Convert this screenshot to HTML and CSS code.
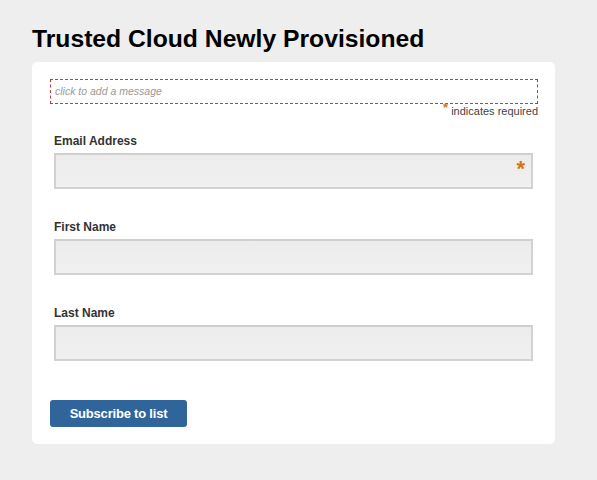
FILE: index.html
```html
<!DOCTYPE html>
<html>
<head>
<meta charset="utf-8">
<link rel="stylesheet" href="styles.css">
</head>
<body>
<div class="page">
  <h1 class="title">Trusted Cloud Newly Provisioned</h1>
  <form class="card">
    <div class="message">click to add a message</div>
    <div class="req-note"><span class="star">*</span> indicates required</div>
    <div class="field">
      <label class="label">Email Address</label>
      <div class="input-wrap">
        <div class="input"></div>
        <span class="input-star">*</span>
      </div>
    </div>
    <div class="field">
      <label class="label">First Name</label>
      <div class="input-wrap"><div class="input"></div></div>
    </div>
    <div class="field">
      <label class="label">Last Name</label>
      <div class="input-wrap"><div class="input"></div></div>
    </div>
    <button type="button" class="btn">Subscribe to list</button>
  </form>
</div>
</body>
</html>
```

FILE: styles.css
```css
html, body {
  margin: 0;
  padding: 0;
  background: #eeeeee;
  font-family: "Liberation Sans", Arial, sans-serif;
}
.page {
  padding: 25px 0 0 32px;
}
.title {
  margin: 0 0 9px 0;
  font-size: 24.7px;
  line-height: 28px;
  font-weight: bold;
  color: #000;
}
.card {
  width: 523px;
  box-sizing: border-box;
  background: #fff;
  border-radius: 5px;
  padding: 17px 17px 17px 18px;
  display: flex;
  flex-direction: column;
}
.message {
  height: 23px;
  border: 1px dashed #c0393b;
  font-size: 10.5px;
  font-style: italic;
  color: #999;
  line-height: 22px;
  padding-left: 4px;
}
.req-note {
  margin-top: 1px;
  text-align: right;
  font-size: 11px;
  line-height: 13px;
  color: #444;
}
.star {
  color: #d8740c;
  font-weight: bold;
  font-size: 13px;
  vertical-align: 3px;
  line-height: 0;
}
.field {
  margin: 16px 4px 0 4px;
  display: flex;
  flex-direction: column;
}
.field + .field {
  margin-top: 31px;
}
.label {
  font-size: 12px;
  line-height: 14px;
  font-weight: bold;
  color: #333;
  margin-bottom: 5px;
}
.input-wrap {
  position: relative;
}
.input {
  height: 32px;
  border: 2px solid #d2d2d2;
  border-top-color: #cfcfcf;
  background: linear-gradient(#ececec, #f0f0f0);
  width: 475px;
}
.input-star {
  position: absolute;
  right: 9px;
  top: 5px;
  color: #d8740c;
  font-weight: bold;
  font-size: 22px;
  line-height: 22px;
}
.btn {
  align-self: flex-start;
  margin-top: 39px;
  width: 137px;
  height: 27px;
  background: #30659b;
  border: none;
  border-radius: 3px;
  color: #fff;
  font-family: "Liberation Sans", Arial, sans-serif;
  font-weight: bold;
  font-size: 13px;
  letter-spacing: -0.2px;
  padding: 0;
}
```
